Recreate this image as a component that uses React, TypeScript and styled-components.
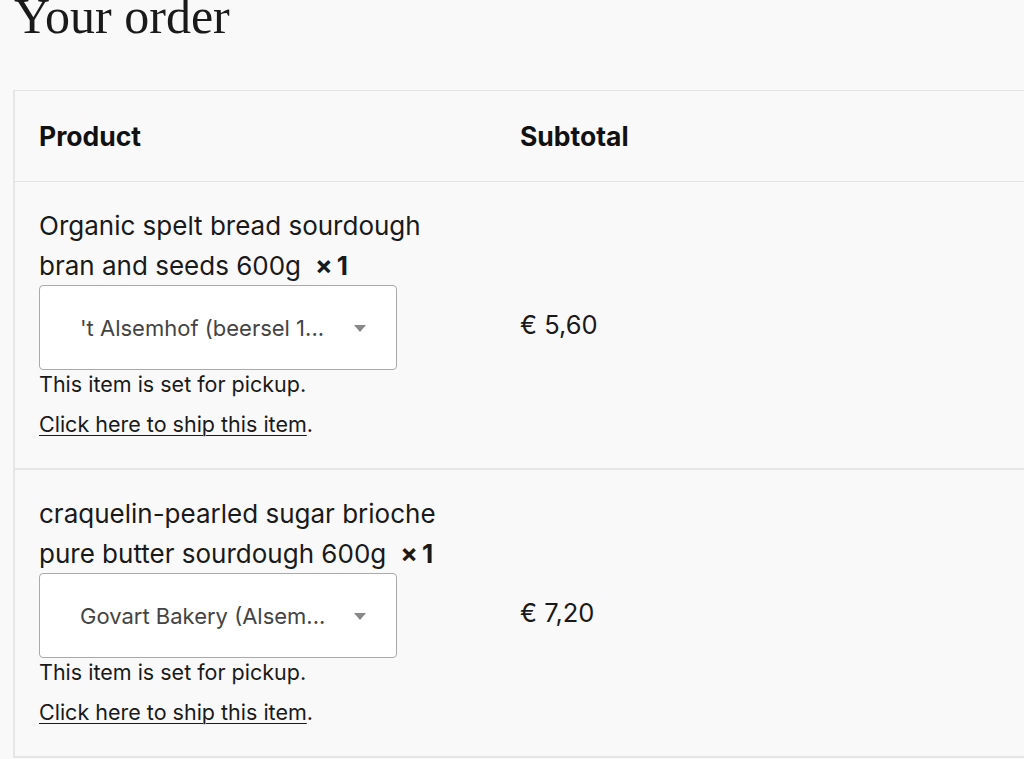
import React from "react";
import styled, { createGlobalStyle } from "styled-components";

const Global = createGlobalStyle`
  html, body { margin: 0; padding: 0; background: #f9f9f9; overflow: hidden; }
  body { font-family: Inter, "Noto Sans", sans-serif; color: #1a1a1a; }
`;

const Page = styled.div`
  padding: 0 0 0 13px;
  width: 1120px;
`;

const Title = styled.h2`
  margin: -13px 0 0 1px;
  font-family: "Liberation Serif", "Times New Roman", serif;
  font-weight: 400;
  font-size: 50px;
  line-height: 59px;
  color: #1a1a1a;
`;

const Table = styled.div`
  margin-top: 44px;
  border-top: 1px solid #e3e3e3;
  border-left: 2px solid #e6e6e6;
`;

const HeadRow = styled.div`
  display: grid;
  grid-template-columns: 481px 1fr;
  align-items: center;
  border-bottom: 1px solid #e3e3e3;
  height: 91px;
  padding-left: 24px;
  box-sizing: border-box;
`;

const Row = styled.div`
  display: grid;
  grid-template-columns: 481px 1fr;
  align-items: start;
  border-bottom: 2px solid #e6e6e6;
  height: 288px;
  padding-left: 24px;
  box-sizing: border-box;
`;

const HeadCell = styled.div`
  font-weight: 700;
  font-size: 26.5px;
  color: #111;
`;

const ProductCell = styled.div`
  display: flex;
  flex-direction: column;
  align-items: flex-start;
  padding-top: 24px;
`;

const Name = styled.div`
  font-size: 26px;
  line-height: 40px;
  width: 420px;
  color: #1a1a1a;
`;

const Qty = styled.strong`
  font-weight: 700;
  margin-left: 14px;
  letter-spacing: -1px;
  white-space: nowrap;
`;

const Select = styled.div`
  box-sizing: border-box;
  width: 358px;
  height: 85px;
  margin-top: -1px;
  background: #fff;
  border: 1px solid #aaa;
  border-radius: 4px;
  display: flex;
  align-items: center;
  padding: 0 30px 0 40px;
  font-size: 22px;
  color: #444;
  justify-content: space-between;
`;

const Arrow = styled.span`
  width: 0;
  height: 0;
  border-left: 6px solid transparent;
  border-right: 6px solid transparent;
  border-top: 7px solid #888;
  margin-top: 2px;
`;

const Note = styled.div`
  font-size: 21.5px;
  line-height: 28px;
  color: #1a1a1a;
`;

const ShipLine = styled.div`
  font-size: 21.5px;
  line-height: 28px;
  margin-top: 12px;
  color: #1a1a1a;
`;

const ShipLink = styled.a`
  color: #1a1a1a;
  text-decoration: underline;
  text-underline-offset: 3px;
  text-decoration-thickness: 1px;
`;

const Price = styled.div`
  font-size: 25.5px;
  color: #1a1a1a;
  align-self: center;
  margin-top: -2px;
`;

const items = [
  {
    name: "Organic spelt bread sourdough bran and seeds 600g",
    store: "'t Alsemhof (beersel 1...",
    price: "€ 5,60",
  },
  {
    name: "craquelin-pearled sugar brioche pure butter sourdough 600g",
    store: "Govart Bakery (Alsem...",
    price: "€ 7,20",
  },
];

export default function App() {
  return (
    <Page>
      <Global />
      <Title>Your order</Title>
      <Table>
        <HeadRow>
          <HeadCell>Product</HeadCell>
          <HeadCell>Subtotal</HeadCell>
        </HeadRow>
        {items.map((it) => (
          <Row key={it.name}>
            <ProductCell>
              <Name>
                {it.name}
                <Qty>× 1</Qty>
              </Name>
              <Select>
                <span>{it.store}</span>
                <Arrow />
              </Select>
              <Note>This item is set for pickup.</Note>
              <ShipLine>
                <ShipLink href="#">Click here to ship this item</ShipLink>.
              </ShipLine>
            </ProductCell>
            <Price>{it.price}</Price>
          </Row>
        ))}
      </Table>
    </Page>
  );
}
